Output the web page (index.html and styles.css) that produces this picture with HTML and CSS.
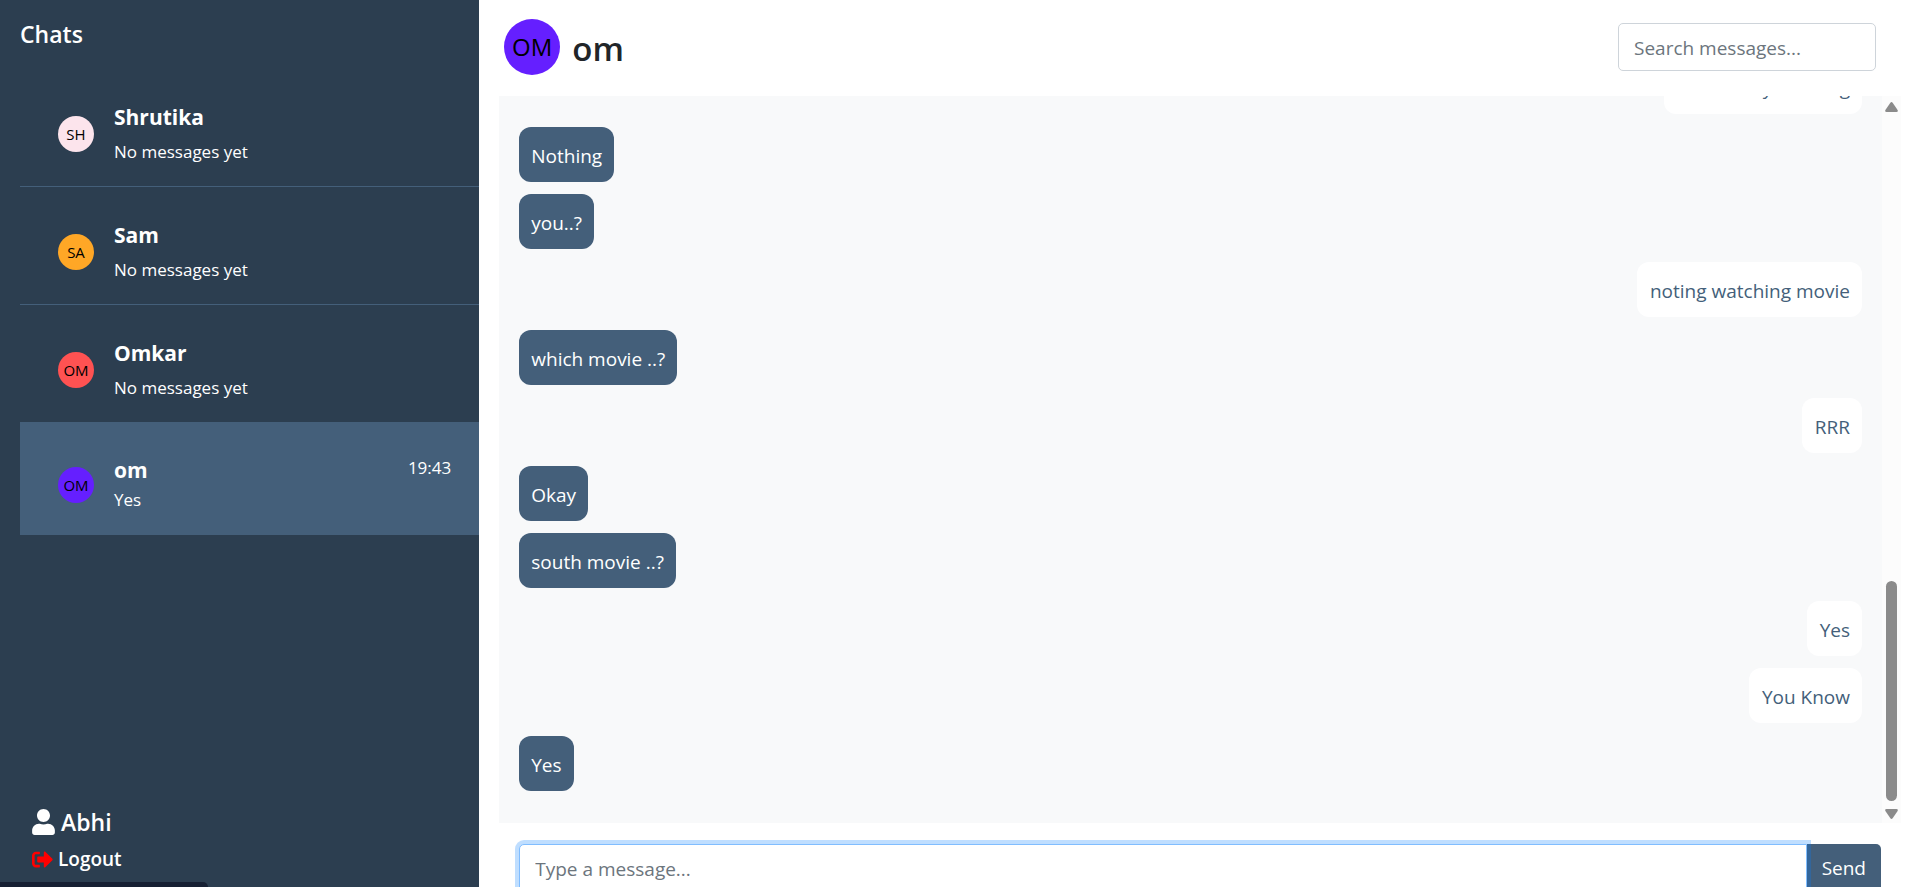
FILE: index.html
```html
<!DOCTYPE html>
<html lang="en">
<head>
<meta charset="utf-8">
<title>Chats</title>
<link rel="stylesheet" href="styles.css">
</head>
<body>
<div class="app">
  <aside class="sidebar">
    <h2 class="sidebar-title">Chats</h2>
    <ul class="chat-list">
      <li class="chat">
        <span class="avatar pink">SH</span>
        <div class="chat-info"><strong class="chat-name">Shrutika</strong><span class="chat-last">No messages yet</span></div>
      </li>
      <li class="chat">
        <span class="avatar orange">SA</span>
        <div class="chat-info"><strong class="chat-name">Sam</strong><span class="chat-last">No messages yet</span></div>
      </li>
      <li class="chat">
        <span class="avatar red">OM</span>
        <div class="chat-info"><strong class="chat-name">Omkar</strong><span class="chat-last">No messages yet</span></div>
      </li>
      <li class="chat active">
        <span class="avatar violet">OM</span>
        <div class="chat-info"><strong class="chat-name">om</strong><span class="chat-last">Yes</span></div>
        <time class="chat-time">19:43</time>
      </li>
    </ul>
    <div class="account">
      <div class="account-name">
        <svg class="icon-user" viewBox="0 0 448 512" aria-hidden="true"><path fill="currentColor" d="M224 256c70.7 0 128-57.3 128-128S294.7 0 224 0 96 57.3 96 128s57.3 128 128 128zm89.6 32h-16.7c-22.2 10.2-46.9 16-72.9 16s-50.6-5.8-72.9-16h-16.7C60.2 288 0 348.2 0 422.4V464c0 26.5 21.5 48 48 48h352c26.5 0 48-21.5 48-48v-41.6c0-74.2-60.2-134.4-134.4-134.4z"/></svg>
        <span>Abhi</span>
      </div>
      <a class="logout" href="#logout">
        <svg class="icon-logout" viewBox="0 0 512 512" aria-hidden="true"><path fill="currentColor" d="M497 273L329 441c-15 15-41 4.5-41-17v-96H152c-13.3 0-24-10.7-24-24v-96c0-13.3 10.7-24 24-24h136V88c0-21.4 25.9-32 41-17l168 168c9.3 9.4 9.3 24.6 0 34zM192 436v-40c0-6.6-5.4-12-12-12H96c-17.7 0-32-14.3-32-32V160c0-17.7 14.3-32 32-32h84c6.6 0 12-5.4 12-12V76c0-6.6-5.4-12-12-12H96c-53 0-96 43-96 96v192c0 53 43 96 96 96h84c6.6 0 12-5.4 12-12z"/></svg>
        <span>Logout</span>
      </a>
    </div>
    <div class="link-status"></div>
  </aside>
  <main class="conversation">
    <header class="top">
      <span class="avatar large violet">OM</span>
      <h1 class="peer">om</h1>
      <input class="field search" type="search" placeholder="Search messages..." aria-label="Search messages">
    </header>
    <section class="history">
      <div class="messages">
        <div class="turn mine"><p class="bubble">What are you doing</p></div>
        <div class="turn"><p class="bubble">Nothing</p><p class="bubble">you..?</p></div>
        <div class="turn mine"><p class="bubble">noting watching movie</p></div>
        <div class="turn"><p class="bubble">which movie ..?</p></div>
        <div class="turn mine"><p class="bubble">RRR</p></div>
        <div class="turn"><p class="bubble">Okay</p><p class="bubble">south movie ..?</p></div>
        <div class="turn mine"><p class="bubble">Yes</p><p class="bubble">You Know</p></div>
        <div class="turn"><p class="bubble">Yes</p></div>
      </div>
      <div class="scrollbar" aria-hidden="true">
        <svg class="arrow" viewBox="0 0 13 10"><path d="M5.2 1Q6.5-.8 7.8 1L12.6 8Q13.4 10 11.5 10H1.5Q-.4 10 .4 8Z"/></svg>
        <div class="track"><div class="thumb"></div></div>
        <svg class="arrow" viewBox="0 0 13 10"><path d="M5.2 9Q6.5 10.8 7.8 9L12.6 2Q13.4 0 11.5 0H1.5Q-.4 0 .4 2Z"/></svg>
      </div>
    </section>
    <form class="composer">
      <input class="field message" type="text" placeholder="Type a message..." aria-label="Message">
      <button class="send" type="button">Send</button>
    </form>
  </main>
</div>
</body>
</html>
```
FILE: styles.css
```css
* { box-sizing: border-box; }

body {
  margin: 0;
  font: 400 19px/30px "Open Sans", "Noto Sans", sans-serif;
  color: #212529;
  background: #fff;
  overflow: hidden;
}

h1, h2, p, ul { margin: 0; padding: 0; }

.app { display: flex; height: 100vh; }

/* Sidebar */
.sidebar {
  position: relative;
  flex: 0 0 25%;
  display: flex;
  flex-direction: column;
  padding: 19px 0 10px 20px;
  background: #2c3e50;
  color: #fff;
}
.sidebar-title { font-size: 23px; font-weight: 600; line-height: 30px; }
.chat-list { list-style: none; margin-top: 20px; }
.chat {
  display: flex;
  align-items: center;
  gap: 20px;
  height: 118px;
  padding: 12px 28px 0 38px;
  border-bottom: 1px solid #445f7a;
}
.chat-info { display: flex; flex: 1; flex-direction: column; gap: 8px; }
.chat-name { font-size: 21px; font-weight: 700; line-height: 28px; }
.chat-last, .chat-time { font-size: 17px; line-height: 26px; }
.chat.active { height: 112px; background: #445f7a; }
.chat.active .chat-info { gap: 3px; }
.chat-time { align-self: flex-start; margin-top: 20px; }

.avatar {
  display: flex;
  flex: none;
  align-items: center;
  justify-content: center;
  width: 36px;
  height: 36px;
  border-radius: 50%;
  color: #000;
  font-size: 15px;
}
.avatar.large { width: 56px; height: 56px; font-size: 24px; }
.pink { background: #fce4ec; }
.orange { background: #ffa726; }
.red { background: #ff5252; }
.violet { background: #651fff; }

.account { margin-top: auto; padding-left: 12px; font-weight: 600; }
.account-name { display: flex; align-items: center; gap: 6px; font-size: 23px; line-height: 38px; }
.logout { display: flex; align-items: center; gap: 5px; line-height: 36px; color: #fff; text-decoration: none; }
.icon-user { width: 23px; height: 26px; }
.icon-logout { width: 21px; height: 21px; color: #f00; }

.link-status {
  position: absolute;
  left: 0;
  bottom: 0;
  width: 208px;
  height: 5px;
  border-top-right-radius: 5px;
  background: #172033;
}

/* Conversation */
.conversation { display: flex; flex: 1; flex-direction: column; padding: 0 16px 0 20px; }
.top { display: flex; flex: 0 0 96px; align-items: center; padding: 0 25px 2px 5px; }
.peer { flex: 1; margin-left: 12px; padding-top: 3px; font-size: 33px; font-weight: 600; line-height: 42px; }
.field {
  height: 48px;
  padding: 2px 15px 0;
  border: 1px solid #ced4da;
  border-radius: 5px;
  background: #fff;
  color: #495057;
  font: inherit;
  outline: none;
}
.field::placeholder { color: #6c757d; opacity: 1; }
.search { width: 258px; }

.history { display: flex; flex: 1; min-height: 0; overflow: hidden; background: #f8f9fa; }
.messages {
  display: flex;
  flex: 1;
  flex-direction: column;
  justify-content: flex-end;
  gap: 13px;
  padding: 0 20px 32px;
}
.turn { display: flex; flex-direction: column; align-items: flex-start; gap: 12px; }
.turn.mine { align-items: flex-end; }
.bubble {
  padding: 14px 12px 11px;
  border-radius: 12px;
  background: #445f7a;
  color: #fff;
}
.mine .bubble { padding: 14px 12px 11px 13px; background: #fff; color: #445f7a; }

.scrollbar {
  display: flex;
  flex: 0 0 19px;
  flex-direction: column;
  align-items: center;
  padding: 6px 0 4px;
  background: #fcfcfc;
}
.arrow { flex: none; width: 13px; height: 10px; fill: #8b8b8b; }
.track { display: flex; flex: 1; flex-direction: column; justify-content: flex-end; padding-bottom: 8px; }
.thumb { width: 11px; height: 32%; border-radius: 6px; background: #8b8b8b; }

/* The composer runs slightly past the bottom edge of the window */
.composer { display: flex; flex: 0 0 69px; align-items: flex-start; margin-bottom: -5px; padding: 21px 20px 0; }
.message {
  position: relative;
  z-index: 1;
  flex: 1;
  border-color: #80bdff;
  border-radius: 5px 0 0 5px;
  box-shadow: 0 0 0 4px rgba(0, 123, 255, 0.25);
}
.send {
  height: 48px;
  padding: 0 15px;
  border: 0;
  border-radius: 0 5px 5px 0;
  background: #445f7a;
  color: #fff;
  font: inherit;
}
```
